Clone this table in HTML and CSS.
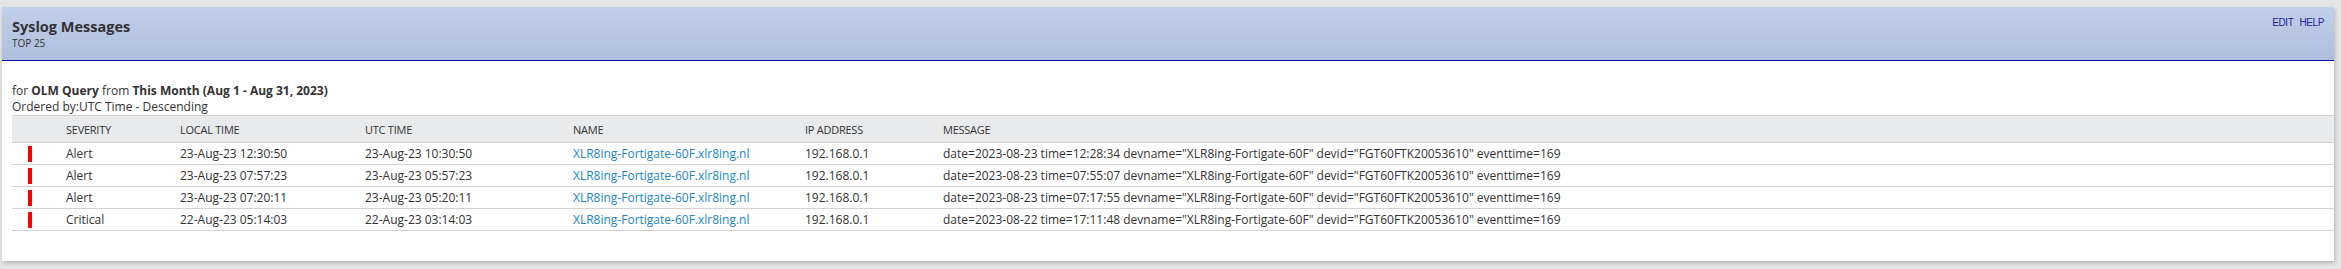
FILE: index.html
```html
<!DOCTYPE html>
<html>
<head>
<meta charset="utf-8">
<link rel="stylesheet" href="styles.css">
</head>
<body>
<div class="panel">
  <div class="panel-head">
    <div class="titles">
      <div class="title">Syslog Messages</div>
      <div class="subtitle">TOP 25</div>
    </div>
    <div class="actions"><a>EDIT</a><a>HELP</a></div>
  </div>
  <div class="panel-body">
    <div class="meta">for <b>OLM Query</b> from <b>This Month (Aug 1 - Aug 31, 2023)</b></div>
    <div class="meta meta2">Ordered by:UTC Time - Descending</div>
    <div class="grid">
      <div class="row head">
        <div></div><div>SEVERITY</div><div>LOCAL TIME</div><div>UTC TIME</div><div>NAME</div><div>IP ADDRESS</div><div>MESSAGE</div>
      </div>
      <div class="row">
        <div><span class="sev"></span></div><div>Alert</div><div>23-Aug-23 12:30:50</div><div>23-Aug-23 10:30:50</div><div><a class="link">XLR8ing-Fortigate-60F.xlr8ing.nl</a></div><div>192.168.0.1</div><div>date=2023-08-23 time=12:28:34 devname="XLR8ing-Fortigate-60F" devid="FGT60FTK20053610" eventtime=169</div>
      </div>
      <div class="row">
        <div><span class="sev"></span></div><div>Alert</div><div>23-Aug-23 07:57:23</div><div>23-Aug-23 05:57:23</div><div><a class="link">XLR8ing-Fortigate-60F.xlr8ing.nl</a></div><div>192.168.0.1</div><div>date=2023-08-23 time=07:55:07 devname="XLR8ing-Fortigate-60F" devid="FGT60FTK20053610" eventtime=169</div>
      </div>
      <div class="row">
        <div><span class="sev"></span></div><div>Alert</div><div>23-Aug-23 07:20:11</div><div>23-Aug-23 05:20:11</div><div><a class="link">XLR8ing-Fortigate-60F.xlr8ing.nl</a></div><div>192.168.0.1</div><div>date=2023-08-23 time=07:17:55 devname="XLR8ing-Fortigate-60F" devid="FGT60FTK20053610" eventtime=169</div>
      </div>
      <div class="row">
        <div><span class="sev"></span></div><div>Critical</div><div>22-Aug-23 05:14:03</div><div>22-Aug-23 03:14:03</div><div><a class="link">XLR8ing-Fortigate-60F.xlr8ing.nl</a></div><div>192.168.0.1</div><div>date=2023-08-22 time=17:11:48 devname="XLR8ing-Fortigate-60F" devid="FGT60FTK20053610" eventtime=169</div>
      </div>
    </div>
  </div>
</div>
</body>
</html>
```
FILE: styles.css
```css
html, body {
  margin: 0;
  padding: 0;
}
body {
  background: #e5e5e5;
  font-family: "Open Sans", "Noto Sans", sans-serif;
  color: #333;
  width: 2341px;
  height: 269px;
  overflow: hidden;
}
.panel {
  margin: 7px 0 0 2px;
  width: 2332px;
  height: 254px;
  background: #fff;
  box-shadow: 1px 2px 4px rgba(0, 0, 0, 0.22);
}
.panel-head {
  height: 53px;
  border-bottom: 1px solid #0a0aa8;
  background: linear-gradient(to bottom, #c1cfe9, #afbedd);
  display: flex;
  justify-content: space-between;
  align-items: flex-start;
  padding: 10px 10px 0 10px;
  box-sizing: content-box;
  height: 43px;
}
.title {
  font-size: 14.5px;
  font-weight: 700;
  line-height: 19px;
  color: #333;
}
.subtitle {
  font-size: 10px;
  line-height: 14px;
  color: #333;
}
.actions {
  display: flex;
  gap: 6px;
  font-family: "Liberation Sans", Arial, sans-serif;
  font-size: 10px;
  line-height: 12px;
  letter-spacing: -0.4px;
  color: #2323a0;
}
.panel-body {
  padding: 21px 0 0 10px;
}
.meta {
  font-size: 12px;
  line-height: 17px;
}
.meta b {
  font-weight: 700;
}
.meta2 {
  line-height: 16px;
}
.grid {
  width: 2322px;
}
.row {
  display: grid;
  grid-template-columns: 54px 114px 185px 208px 232px 138px 1fr;
  align-items: center;
  height: 21px;
  border-bottom: 1px solid #d2d2d2;
  font-size: 12px;
  white-space: nowrap;
}
.row.head {
  height: 26px;
  border-top: 1px solid #d2d2d2;
  background: #e9eaec;
  font-size: 11px;
  letter-spacing: -0.25px;
}
.sev {
  display: block;
  width: 4px;
  height: 16px;
  margin-left: 16px;
  background: #ff0000;
}
.link {
  color: #1b87c6;
}
```
